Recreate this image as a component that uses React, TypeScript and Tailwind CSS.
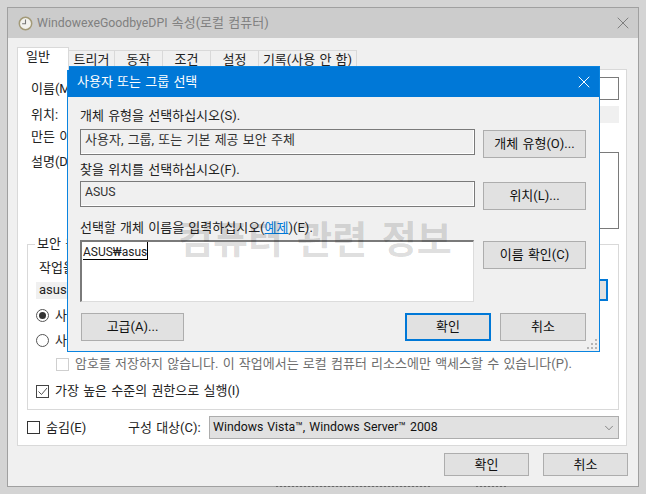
import { ChevronDown, X } from "lucide-react";
import type { ReactNode } from "react";

const font = "font-['Roboto','Noto_Sans_CJK_KR',sans-serif] [word-spacing:1px]";

function Btn({ children, className = "", primary }: { children: ReactNode; className?: string; primary?: boolean }) {
  return (
    <div className={`flex items-center justify-center bg-[#e1e1e1] text-[13px] text-[#111] ${primary ? "border-2 border-[#0078d7]" : "border border-[#adadad]"} ${className}`}>
      {children}
    </div>
  );
}

function Tab({ label, w }: { label: string; w: string }) {
  return (
    <div className={`h-[19px] bg-[#f0f0f0] border-t border-r border-[#d9d9d9] flex items-center justify-center text-[13px] text-[#222] ${w}`}>
      {label}
    </div>
  );
}

function Radio({ on }: { on?: boolean }) {
  return (
    <div className="w-[13px] h-[13px] rounded-full border border-[#555] bg-white flex items-center justify-center">
      {on && <div className="w-[7px] h-[7px] rounded-full bg-[#333]" />}
    </div>
  );
}

function BackWindow() {
  return (
    <div className="absolute left-[7px] top-[7px] w-[632px] h-[480px] border border-[#a0a0a0] bg-[#f0f0f0]">
      <div className="h-[30px] bg-[#cccccc] flex items-center pl-[10px] pr-[5px] text-[13px] text-[#808080]">
        <svg width="15" height="15" viewBox="0 0 15 15" className="mr-[4px]">
          <circle cx="7.5" cy="7.5" r="6.2" fill="#f2f2ee" stroke="#a39a78" strokeWidth="1.5" />
          <path d="M7.5 3.5v4.3h-3.4" fill="none" stroke="#777" strokeWidth="1.1" />
        </svg>
        <span className="flex-1">
          <span className="text-[12.3px]">WindowexeGoodbyeDPI</span> 속성(로컬 컴퓨터)
        </span>
        <X size={20} strokeWidth={1.1} color="#777" />
      </div>

      <div className="flex items-end pl-[9px] h-[31px]">
        <div className="w-[52px] h-[23px] bg-white border border-b-0 border-[#d9d9d9] pl-[8px] text-[13px] leading-[18px] text-[#222] relative z-10 -mb-px">일반</div>
        <Tab label="트리거" w="w-[46px]" />
        <Tab label="동작" w="w-[48px]" />
        <Tab label="조건" w="w-[48px]" />
        <Tab label="설정" w="w-[48px]" />
        <Tab label="기록(사용 안 함)" w="w-[98px]" />
      </div>

      <div className="ml-[9px] w-[610px] h-[377px] bg-white border border-[#d9d9d9] pl-[9px] pr-[7px] text-[13px] text-[#222]">
        <div className="flex items-center h-[23px] mt-[7px]">
          <span className="pl-[4px] w-[80px]">이름(M):</span>
          <div className="flex-1 h-full border border-[#7a7a7a] bg-white" />
        </div>
        <div className="flex items-center h-[17px] mt-[6px]">
          <span className="pl-[4px] w-[80px]">위치:</span>
          <div className="flex-1 h-full bg-[#f0f0f0]" />
        </div>
        <div className="h-[20px] mt-[4px] pl-[4px] leading-[20px]">만든 이(A):</div>
        <div className="flex h-[77px] mt-[5px]">
          <span className="pl-[4px] w-[80px]">설명(D):</span>
          <div className="flex-1 border border-[#7a7a7a] bg-white" />
        </div>

        <div className="mt-[15px] h-[166px] border border-[#d9d9d9] relative pl-[8px]">
          <span className="absolute left-[7px] -top-[10px] bg-white px-[2px] leading-[18px]">보안 옵션</span>
          <div className="pt-[14px] h-[34px] pl-[3px] leading-[18px]">작업을 실행할 때 사용할 사용자 계정:</div>
          <div className="flex items-center h-[22px] pr-[10px]">
            <div className="flex-1 h-[17px] bg-[#f0f0f0] pl-[3px] flex items-center">asus</div>
            <div className="w-[100px] h-full border-2 border-[#0078d7] bg-[#e1e1e1]" />
          </div>
          <div className="flex items-center mt-[2px] h-[25px] gap-[6px]">
            <Radio on />
            <span>사용자가 로그온할 때만 실행</span>
          </div>
          <div className="flex items-center h-[25px] gap-[6px]">
            <Radio />
            <span>사용자의 로그온 여부에 관계없이 실행</span>
          </div>
          <div className="flex items-center h-[20px] mt-[1px] pl-[20px] gap-[6px] text-[#6d6d6d]">
            <div className="w-[13px] h-[13px] border border-[#cfcfcf]" />
            <span>암호를 저장하지 않습니다. 이 작업에서는 로컬 컴퓨터 리소스에만 액세스할 수 있습니다(P).</span>
          </div>
          <div className="flex items-center h-[20px] mt-[7px] gap-[6px]">
            <div className="w-[13px] h-[13px] border border-[#444] flex items-center justify-center">
              <svg width="11" height="11" viewBox="0 0 11 11">
                <path d="M1.5 5.5l3 3 5.5-6.5" fill="none" stroke="#555" strokeWidth="1" />
              </svg>
            </div>
            <span>가장 높은 수준의 권한으로 실행(I)</span>
          </div>
        </div>

        <div className="flex items-center h-[23px] mt-[6px]">
          <div className="w-[13px] h-[13px] border border-[#333]" />
          <span className="ml-[6px] w-[82px]">숨김(E)</span>
          <span className="w-[81px]">구성 대상(C):</span>
          <div className="flex-1 h-full bg-[#e1e1e1] border border-[#adadad] flex items-center pl-[3px] pr-[2px]">
            <span className="flex-1 text-[#111] text-[12.3px]">Windows Vista™, Windows Server™ 2008</span>
            <ChevronDown size={14} strokeWidth={1} color="#444" />
          </div>
        </div>
      </div>

      <div className="flex justify-end gap-[14px] pr-[10px] mt-[7px]">
        <Btn className="w-[85px] h-[23px]">확인</Btn>
        <Btn className="w-[85px] h-[23px]">취소</Btn>
      </div>
    </div>
  );
}

function Field({ children }: { children: ReactNode }) {
  return (
    <div className="w-[395px] h-[26px] bg-[#f0f0f0] border border-[#7a7a7a] shadow-[inset_-1px_-1px_0_#fff] pl-[4px] text-[13px] text-[#333] leading-[19px]">
      {children}
    </div>
  );
}

function PickerDialog() {
  return (
    <div className="absolute left-[67px] top-[66px] w-[533px] h-[286px] bg-[#f0f0f0] border border-[#0a84e0]">
      <div className="h-[30px] bg-[#0078d7] flex items-center pl-[9px] pr-[5px] text-[13px] text-white">
        <span className="flex-1">사용자 또는 그룹 선택</span>
        <X size={20} strokeWidth={1.2} color="#fff" />
      </div>

      <div className="pl-[12px] pr-[13px] text-[13px] text-[#222] leading-[18px]">
        <div className="mt-[10px] h-[18px]">개체 유형을 선택하십시오(S).</div>
        <div className="flex justify-between items-start h-[32px] mt-[4px]">
          <Field>사용자, 그룹, 또는 기본 제공 보안 주체</Field>
          <Btn className="w-[103px] h-[28px] mt-px">개체 유형(O)...</Btn>
        </div>
        <div className="h-[18px]">찾을 위치를 선택하십시오(F).</div>
        <div className="flex justify-between items-start h-[38px] mt-[2px]">
          <Field><span className="text-[12.3px]">ASUS</span></Field>
          <Btn className="w-[103px] h-[28px] mt-px">위치(L)...</Btn>
        </div>
        <div className="h-[18px]">
          선택할 개체 이름을 입력하십시오(<span className="text-[#0078d7] underline">예제</span>)(E).
        </div>
        <div className="flex justify-between items-start h-[73px] mt-[3px]">
          <div className="w-[394px] h-[62px] bg-white border-t-2 border-l-2 border-[#7a7a7a] border-r border-b border-r-[#dcdcdc] border-b-[#dcdcdc] pl-[1px] text-[#222]">
            <span className="inline-flex items-end h-[18px] border-b border-r border-black leading-[14px] text-[12px]">ASUS₩asus</span>
          </div>
          <Btn className="w-[103px] h-[28px] mt-px">이름 확인(C)</Btn>
        </div>
        <div className="flex items-center h-[28px]">
          <Btn className="w-[103px] h-[28px] ml-px">고급(A)...</Btn>
          <div className="flex-1" />
          <Btn primary className="w-[86px] h-[28px]">확인</Btn>
          <Btn className="w-[86px] h-[28px] ml-[9px]">취소</Btn>
        </div>
      </div>
      <svg width="12" height="12" viewBox="0 0 12 12" className="absolute right-[1px] bottom-[1px]">
        <path d="M9 1h2v2H9zM5 5h2v2H5zM9 5h2v2H9zM1 9h2v2H1zM5 9h2v2H5zM9 9h2v2H9z" fill="#b5b5b5" />
      </svg>
    </div>
  );
}

export default function App() {
  return (
    <div className={`relative w-[646px] h-[494px] overflow-hidden bg-[#d4d4d4] ${font}`}>
      <BackWindow />
      {/* specks of the page behind, showing along the window's bottom edge */}
      <div className="absolute left-[276px] top-[486px] w-[154px] h-px bg-[repeating-linear-gradient(90deg,#666_0,#666_2px,transparent_2px,transparent_4px)]" />
      <div className="absolute left-[476px] top-[486px] w-[30px] h-px bg-[repeating-linear-gradient(90deg,#666_0,#666_2px,transparent_2px,transparent_4px)]" />
      <PickerDialog />
      {/* blog watermark sits over both windows */}
      <div className="absolute left-[178px] top-[217px] text-[38px] font-bold leading-[46px] text-black/15 whitespace-nowrap [word-spacing:5px]">
        컴퓨터 관련 정보
      </div>
    </div>
  );
}
